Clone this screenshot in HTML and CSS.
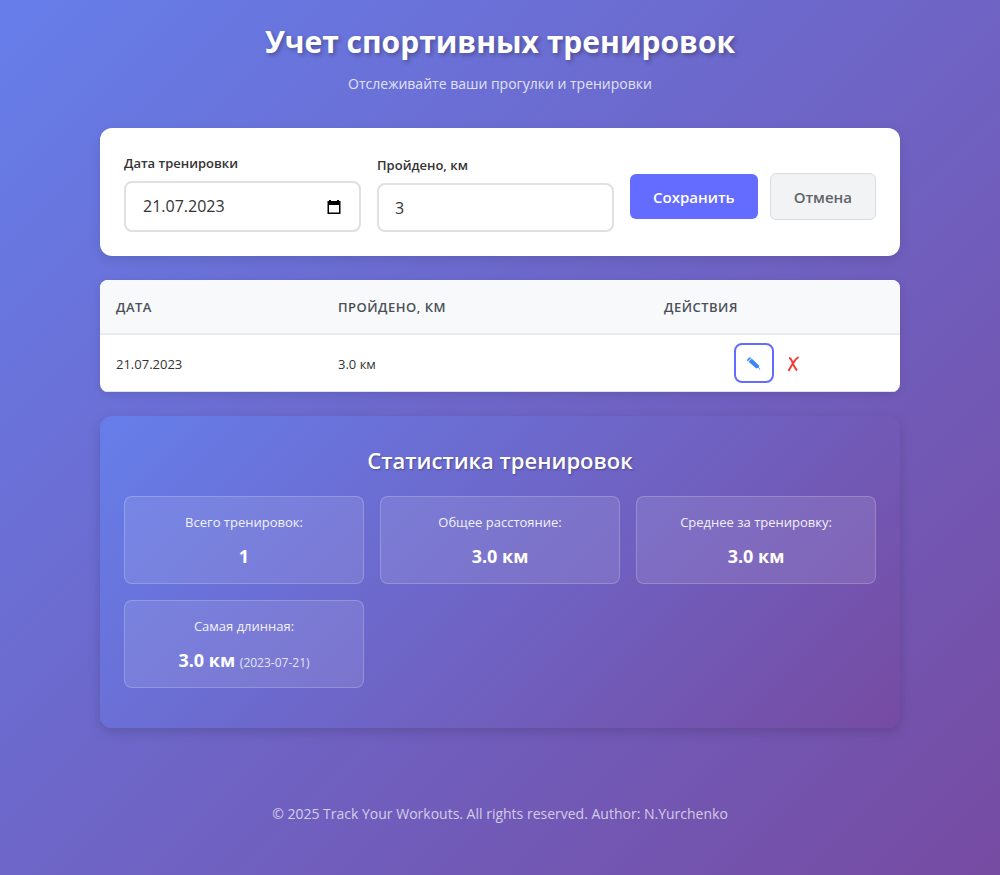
FILE: index.html
```html
<!DOCTYPE html>
<html lang="ru">
<head>
<meta charset="utf-8">
<meta name="viewport" content="width=device-width, initial-scale=1">
<title>Учет спортивных тренировок</title>
<link rel="stylesheet" href="styles.css">
</head>
<body>
<div class="app">
  <header class="header">
    <h1 class="header-title">Учет спортивных тренировок</h1>
    <p class="header-subtitle">Отслеживайте ваши прогулки и тренировки</p>
  </header>

  <main class="main">
    <form class="form">
      <div class="field">
        <label class="field-label" for="date">Дата тренировки</label>
        <div class="input date-input">
          <input class="date-value" id="date" type="text" value="21.07.2023">
          <button class="date-button" type="button" aria-label="Открыть календарь">
            <svg width="16" height="16" viewBox="0 0 16 16" aria-hidden="true"><path fill="#000" fill-rule="evenodd" d="M3 1h2v1h6V1h2v1h1.500v12.500q0 .5-.5.500H2q-.5 0-.5-.5V2H3zM3 6v7.500h10V6z"/></svg>
          </button>
        </div>
      </div>
      <div class="field">
        <label class="field-label" for="distance">Пройдено, км</label>
        <input class="input distance-input" id="distance" type="text" inputmode="decimal" value="3">
      </div>
      <div class="form-actions">
        <button class="button button-save" type="submit">Сохранить</button>
        <button class="button button-cancel" type="button">Отмена</button>
      </div>
    </form>

    <table class="table">
      <thead>
        <tr><th class="col-date">Дата</th><th class="col-distance">Пройдено, км</th><th>Действия</th></tr>
      </thead>
      <tbody>
        <tr>
          <td>21.07.2023</td>
          <td>3.0 км</td>
          <td class="cell-actions">
            <div class="row-actions">
              <button class="icon-button icon-edit" type="button" aria-label="Редактировать">
                <svg width="16" height="16" viewBox="0 0 16 16" aria-hidden="true"><g fill="#3b88fd"><path d="M1.200 4.400 3.200 2.400Q4 1.900 4.700 2.600L5.100 3 1.900 6.200 1.400 5.700Q.7 5 1.200 4.400z"/><path d="M2.500 6.800 5.700 3.600 13.200 10.800 12.900 12.800 10.300 13.600z"/><path d="M12.600 14 13.500 13 14.500 14.900z"/></g></svg>
              </button>
              <button class="icon-button" type="button" aria-label="Удалить">
                <svg width="16" height="18" viewBox="0 0 16 18" aria-hidden="true"><path fill="none" stroke="#ef3e36" stroke-width="2" d="M3 4Q5 4 6.500 8.500T11 16.500M12.500 3Q9.500 5 6.800 9.500T2.500 17"/></svg>
              </button>
            </div>
          </td>
        </tr>
      </tbody>
    </table>

    <section class="stats">
      <h2 class="stats-title">Статистика тренировок</h2>
      <div class="stats-grid">
        <div class="stat"><span class="stat-label">Всего тренировок:</span><span class="stat-value">1</span></div>
        <div class="stat"><span class="stat-label">Общее расстояние:</span><span class="stat-value">3.0 км</span></div>
        <div class="stat"><span class="stat-label">Среднее за тренировку:</span><span class="stat-value">3.0 км</span></div>
        <div class="stat"><span class="stat-label">Самая длинная:</span><span class="stat-value">3.0 км <small class="stat-date">(2023-07-21)</small></span></div>
      </div>
    </section>
  </main>

  <footer class="footer">© 2025 Track Your Workouts. All rights reserved. Author: N.Yurchenko</footer>
</div>
</body>
</html>
```
FILE: styles.css
```css
*, *::before, *::after { box-sizing: border-box; }

body {
  margin: 0;
  min-height: 100vh;
  background: linear-gradient(135deg, #667eea 0%, #764ba2 100%);
  color: #333;
  font-family: "Segoe UI", "Open Sans", "Noto Sans", sans-serif;
  font-size: 14px;
  line-height: 20px;
}

h1, h2, p { margin: 0; }

.app {
  max-width: 840px;
  margin: 0 auto;
  padding: 20px;
}

.header {
  margin-bottom: 32px;
  text-align: center;
  color: #fff;
}

.header-title {
  margin-bottom: 8px;
  font-size: 30px;
  font-weight: 700;
  line-height: 44px;
  text-shadow: 2px 2px 4px rgba(0, 0, 0, 0.3);
}

.header-subtitle {
  font-size: 14px;
  line-height: 24px;
  opacity: 0.8;
}

.main {
  display: flex;
  flex-direction: column;
  gap: 24px;
}

.form {
  display: flex;
  align-items: flex-end;
  gap: 16px;
  padding: 24px;
  border-radius: 12px;
  background: #fff;
  box-shadow: 0 4px 12px rgba(0, 0, 0, 0.1);
}

.field {
  display: flex;
  flex: 1;
  flex-direction: column;
  gap: 6px;
  min-width: 0;
}

.field-label {
  font-size: 13px;
  font-weight: 600;
  line-height: 23px;
}

.input {
  width: 100%;
  padding: 12px 16px;
  border: 2px solid #e0e0e0;
  border-radius: 8px;
  background: #fff;
  color: #333;
  font: inherit;
  font-size: 16px;
  line-height: 21px;
}

.date-input {
  display: flex;
  align-items: center;
  height: 51px;
}

.distance-input { height: 49px; }

.date-value {
  flex: 1;
  min-width: 0;
  padding: 0 1px;
  border: 0;
  background: none;
  color: inherit;
  font: inherit;
}

.date-button {
  display: flex;
  padding: 0 1px;
  border: 0;
  background: none;
}

.form-actions {
  display: flex;
  align-items: center;
  gap: 12px;
  margin-bottom: 12px;
}

.button {
  padding: 13px 23px 11px;
  border: 0;
  border-radius: 6px;
  font: inherit;
  font-size: 15px;
  font-weight: 600;
  line-height: 21px;
  cursor: pointer;
}

.button-save {
  background: #646cff;
  color: #fff;
}

.button-cancel {
  border: 1px solid #dadce0;
  background: #f1f3f4;
  color: #5f6368;
}

.table {
  width: 100%;
  overflow: hidden;
  border-spacing: 0;
  border-radius: 8px;
  background: #fff;
  box-shadow: 0 2px 8px rgba(0, 0, 0, 0.1);
  text-align: left;
  table-layout: fixed;
}

.col-date { width: 222px; }
.col-distance { width: 326px; }

.table th {
  padding: 9px 16px 7px;
  border-bottom: 2px solid #e9ecef;
  background: #f8f9fa;
  color: #495057;
  font-size: 13px;
  font-weight: 600;
  line-height: 37px;
  letter-spacing: 0.5px;
  text-transform: uppercase;
}

.table td {
  padding: 9px 16px 7px;
  border-bottom: 1px solid #e0e0e0;
  font-size: 13px;
}

.table .cell-actions { padding-block: 8px; }

.row-actions {
  display: flex;
  justify-content: center;
}

.icon-button {
  display: flex;
  align-items: center;
  justify-content: center;
  width: 40px;
  height: 40px;
  padding: 0;
  border: 2px solid transparent;
  border-radius: 8px;
  background: none;
  cursor: pointer;
}

.icon-edit { border-color: #646cff; }

.stats {
  padding: 24px 24px 40px;
  border-radius: 12px;
  background: linear-gradient(135deg, #667eea 0%, #764ba2 100%);
  box-shadow: 0 4px 12px rgba(0, 0, 0, 0.15);
  color: #fff;
  text-align: center;
}

.stats-title {
  margin-bottom: 16px;
  font-size: 22px;
  font-weight: 600;
  line-height: 40px;
  text-shadow: 1px 1px 2px rgba(0, 0, 0, 0.3);
}

.stats-grid {
  display: grid;
  grid-template-columns: repeat(auto-fit, minmax(200px, 1fr));
  gap: 16px;
}

.stat {
  display: flex;
  flex-direction: column;
  gap: 10px;
  padding: 15px 15px 13px;
  border: 1px solid rgba(255, 255, 255, 0.2);
  border-radius: 8px;
  background: rgba(255, 255, 255, 0.1);
}

.stat-label {
  font-size: 13px;
  opacity: 0.9;
}

.stat-value {
  font-size: 18px;
  font-weight: 700;
  line-height: 28px;
}

.stat-date {
  font-size: 12px;
  font-weight: 400;
  line-height: 16px;
  opacity: 0.8;
}

.footer {
  margin-top: 44px;
  padding: 32px 0;
  color: rgba(255, 255, 255, 0.7);
  font-size: 14px;
  text-align: center;
}
```
